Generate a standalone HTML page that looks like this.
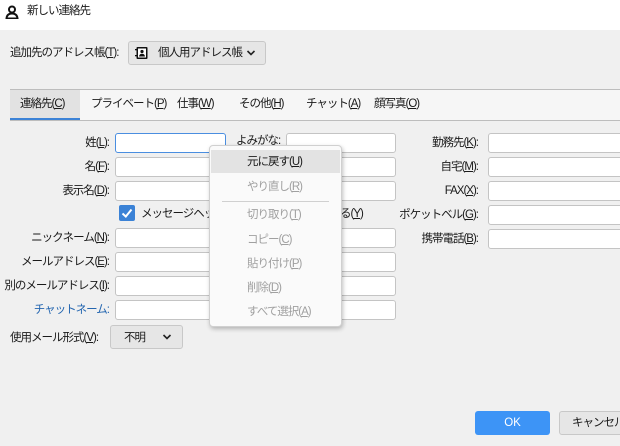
<!DOCTYPE html>
<html><head><meta charset="utf-8"><style>
*{box-sizing:border-box;margin:0;padding:0}
body{width:620px;height:446px;overflow:hidden;background:#f0f0f0;font-family:"Liberation Sans","Noto Sans CJK JP",sans-serif;font-size:11.5px;letter-spacing:-1px;color:#1a1a1a;position:relative}
.a{position:absolute;white-space:nowrap}
.title{left:0;top:0;width:620px;height:30px;background:#fff}
.in{position:absolute;height:20px;background:#fff;border:1px solid #c4c4c4;border-radius:3px}
.lbl{position:absolute;text-align:right;line-height:20px;white-space:nowrap}
u{text-decoration:underline}
.btn{position:absolute;background:#e6e6e6;border:1px solid #c8c8c8;border-radius:3px;line-height:22px;white-space:nowrap}
.menu{left:209px;top:145px;width:133px;height:182px;background:#fafafa;border:1px solid #d0d0d0;border-radius:4px;box-shadow:1px 2px 4px rgba(0,0,0,.25)}
.mi{position:absolute;left:37px;color:#a0a0a0;line-height:20px}
</style></head><body>
<div class="a title"></div>
<svg class="a" style="left:5px;top:5px" width="14" height="14" viewBox="0 0 14 14"><circle cx="7" cy="4.5" r="3" fill="none" stroke="#111" stroke-width="2"/><path d="M1.5 13.5 Q2 8.5 7 8.5 Q12 8.5 12.5 13.5Z" fill="none" stroke="#111" stroke-width="2"/></svg>
<div class="a" style="left:27px;top:4px;line-height:15px">新しい連絡先</div>

<div class="a" style="left:10px;top:45px;line-height:16px">追加先のアドレス帳(<u>T</u>):</div>
<div class="btn" style="left:128px;top:41px;width:138px;height:24px"></div>
<svg class="a" style="left:135px;top:46px" width="14" height="14" viewBox="0 0 14 14"><rect x="1.5" y="1" width="11" height="12" rx="1" fill="#111"/><rect x="3" y="2.5" width="8" height="9" fill="#fff"/><circle cx="7" cy="5.5" r="1.6" fill="#111"/><path d="M4 10.5Q4.5 7.8 7 7.8Q9.5 7.8 10 10.5Z" fill="#111"/><rect x="0" y="3" width="2" height="1.3" fill="#111"/><rect x="0" y="9" width="2" height="1.3" fill="#111"/></svg>
<div class="a" style="left:158px;top:45px;line-height:16px">個人用アドレス帳</div>
<svg class="a" style="left:246px;top:49px" width="10" height="8" viewBox="0 0 10 8"><path d="M1.5 2 L5 5.5 L8.5 2" fill="none" stroke="#222" stroke-width="1.6"/></svg>

<div class="a" style="left:10px;top:89px;width:610px;height:32px;background:#f6f6f6;border-top:1px solid #bdbdbd;border-bottom:1px solid #bdbdbd"></div>
<div class="a" style="left:10px;top:90px;width:70px;height:30px;background:#e2e2e2;border-bottom:2px solid #3b82d6"></div>
<div class="a" style="left:20px;top:96px;line-height:16px">連絡先(<u>C</u>)</div>
<div class="a" style="left:91px;top:96px;line-height:16px">プライベート(<u>P</u>)</div>
<div class="a" style="left:177px;top:96px;line-height:16px">仕事(<u>W</u>)</div>
<div class="a" style="left:239px;top:96px;line-height:16px">その他(<u>H</u>)</div>
<div class="a" style="left:306px;top:96px;line-height:16px">チャット(<u>A</u>)</div>
<div class="a" style="left:374px;top:96px;line-height:16px">顔写真(<u>O</u>)</div>

<div class="lbl" style="left:0;width:109px;top:133px">姓(<u>L</u>):</div>
<div class="lbl" style="left:0;width:109px;top:157px">名(<u>F</u>):</div>
<div class="lbl" style="left:0;width:109px;top:181px">表示名(<u>D</u>):</div>
<div class="lbl" style="left:0;width:109px;top:228px">ニックネーム(<u>N</u>):</div>
<div class="lbl" style="left:0;width:109px;top:252px">メールアドレス(<u>E</u>):</div>
<div class="lbl" style="left:0;width:109px;top:276px">別のメールアドレス(<u>I</u>):</div>
<div class="lbl" style="left:0;width:109px;top:300px;color:#2466b0">チャットネーム:</div>

<div class="in" style="left:115px;top:133px;width:111px;border:1.5px solid #4a8ee0"></div>
<div class="in" style="left:115px;top:157px;width:111px"></div>
<div class="in" style="left:115px;top:181px;width:111px"></div>
<div class="in" style="left:115px;top:228px;width:111px"></div>
<div class="in" style="left:115px;top:252px;width:111px"></div>
<div class="in" style="left:115px;top:276px;width:111px"></div>
<div class="in" style="left:115px;top:300px;width:111px"></div>

<div class="a" style="left:236px;top:133px;line-height:16px">よみがな:</div>
<div class="in" style="left:286px;top:133px;width:110px"></div>
<div class="in" style="left:286px;top:157px;width:110px"></div>
<div class="in" style="left:286px;top:181px;width:110px"></div>
<div class="in" style="left:286px;top:228px;width:110px"></div>
<div class="in" style="left:286px;top:252px;width:110px"></div>
<div class="in" style="left:286px;top:276px;width:110px"></div>
<div class="in" style="left:286px;top:300px;width:110px"></div>

<div class="a" style="left:119px;top:205px;width:16px;height:16px;background:#3b82d6;border-radius:2px"></div>
<svg class="a" style="left:119px;top:205px" width="16" height="16"><path d="M3.5 8.5 L6.8 11.5 L12.5 4.5" fill="none" stroke="#fff" stroke-width="2"/></svg>
<div class="a" style="left:141px;top:206px;line-height:16px">メッセージヘッダ</div>
<div class="a" style="left:340px;top:206px;line-height:16px">る(<u>Y</u>)</div>

<div class="lbl" style="left:380px;width:98px;top:133px">勤務先(<u>K</u>):</div>
<div class="lbl" style="left:380px;width:98px;top:157px">自宅(<u>M</u>):</div>
<div class="lbl" style="left:380px;width:98px;top:181px">FAX(<u>X</u>):</div>
<div class="lbl" style="left:380px;width:98px;top:205px">ポケットベル(<u>G</u>):</div>
<div class="lbl" style="left:380px;width:98px;top:229px">携帯電話(<u>B</u>):</div>
<div class="in" style="left:488px;top:133px;width:140px"></div>
<div class="in" style="left:488px;top:157px;width:140px"></div>
<div class="in" style="left:488px;top:181px;width:140px"></div>
<div class="in" style="left:488px;top:205px;width:140px"></div>
<div class="in" style="left:488px;top:229px;width:140px"></div>

<div class="a" style="left:10px;top:330px;line-height:16px">使用メール形式(<u>V</u>):</div>
<div class="btn" style="left:110px;top:325px;width:73px;height:24px"></div>
<div class="a" style="left:124px;top:330px;line-height:16px">不明</div>
<svg class="a" style="left:162px;top:333px" width="10" height="8" viewBox="0 0 10 8"><path d="M1.5 2 L5 5.5 L8.5 2" fill="none" stroke="#222" stroke-width="1.6"/></svg>

<div class="a menu">
<div class="a" style="left:1px;top:4px;width:129px;height:23px;background:#e3e3e3"></div>
<div class="mi" style="top:6px;color:#1a1a1a">元に戻す(<u>U</u>)</div>
<div class="mi" style="top:31px">やり直し(<u>R</u>)</div>
<div class="a" style="left:12px;top:55px;width:107px;height:1px;background:#d0d0d0"></div>
<div class="mi" style="top:59px">切り取り(<u>T</u>)</div>
<div class="mi" style="top:84px">コピー(<u>C</u>)</div>
<div class="mi" style="top:108px">貼り付け(<u>P</u>)</div>
<div class="mi" style="top:132px">削除(<u>D</u>)</div>
<div class="mi" style="top:156px">すべて選択(<u>A</u>)</div>
</div>

<div class="a" style="left:475px;top:411px;width:75px;height:24px;background:#3d94f6;border-radius:3px;color:#fff;text-align:center;line-height:24px;letter-spacing:0">OK</div>
<div class="btn" style="left:559px;top:411px;width:80px;height:24px;padding-left:12px">キャンセル</div>
</body></html>
